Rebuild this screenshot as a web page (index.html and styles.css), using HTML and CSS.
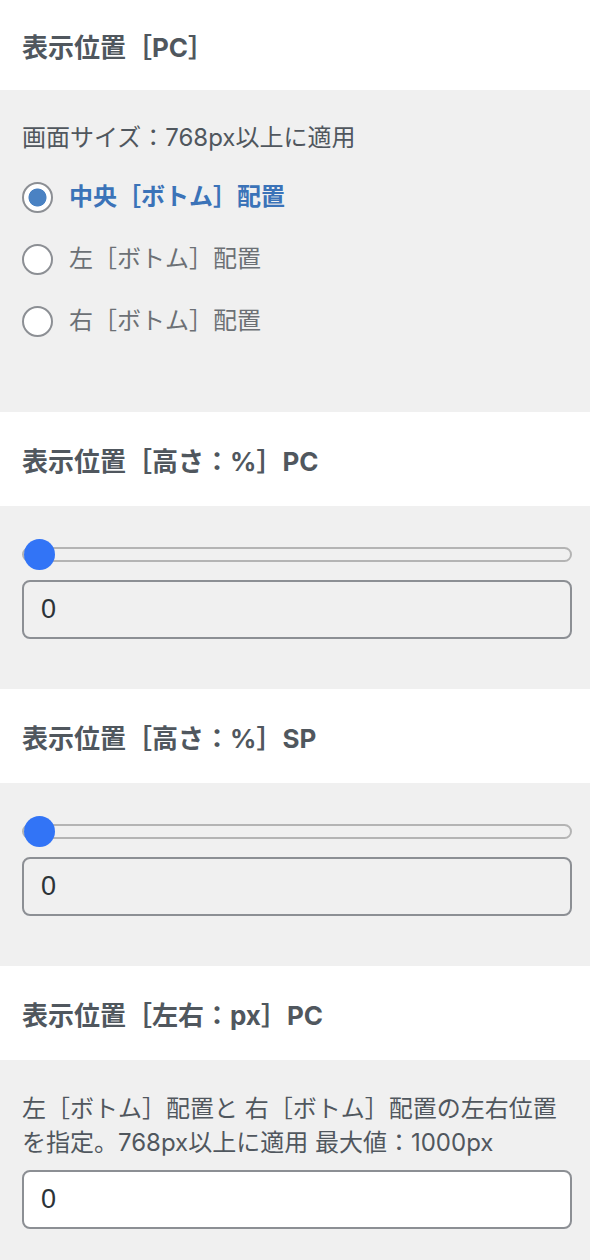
FILE: index.html
```html
<!DOCTYPE html>
<html lang="ja">
<head>
<meta charset="utf-8">
<title>表示位置</title>
<link rel="stylesheet" href="styles.css">
</head>
<body>
<div class="controls">
  <section class="control">
    <h3 class="control-title first">表示位置［PC］</h3>
    <div class="control-body radios-body">
      <p class="desc">画面サイズ：768px以上に適用</p>
      <ul class="radio-list">
        <li class="radio-row"><input class="radio" type="radio" name="pos" id="pos-c" checked><label class="radio-label selected" for="pos-c">中央［ボトム］配置</label></li>
        <li class="radio-row"><input class="radio" type="radio" name="pos" id="pos-l"><label class="radio-label" for="pos-l">左［ボトム］配置</label></li>
        <li class="radio-row"><input class="radio" type="radio" name="pos" id="pos-r"><label class="radio-label" for="pos-r">右［ボトム］配置</label></li>
      </ul>
    </div>
  </section>
  <section class="control">
    <h3 class="control-title">表示位置［高さ：%］PC</h3>
    <div class="control-body slider-body">
      <input class="range" type="range" min="0" max="100" value="0">
      <input class="num num-gray" type="text" value="0">
    </div>
  </section>
  <section class="control">
    <h3 class="control-title">表示位置［高さ：%］SP</h3>
    <div class="control-body slider-body">
      <input class="range" type="range" min="0" max="100" value="0">
      <input class="num num-gray" type="text" value="0">
    </div>
  </section>
  <section class="control">
    <h3 class="control-title">表示位置［左右：px］PC</h3>
    <div class="control-body text-body">
      <p class="desc">左［ボトム］配置と 右［ボトム］配置の左右位置を指定。768px以上に適用 最大値：1000px</p>
      <input class="num num-white" type="text" value="0">
    </div>
  </section>
</div>
</body>
</html>
```

FILE: styles.css
```css
* { box-sizing: border-box; }
html, body { margin: 0; padding: 0; background: #ffffff; }
body {
  width: 590px;
  font-family: Inter, "Noto Sans CJK JP", sans-serif;
  color: #50575e;
}
.controls { display: flex; flex-direction: column; }
.control-title {
  margin: 0;
  height: 94px;
  padding: 0 22px;
  display: flex;
  align-items: center;
  font-size: 26px;
  font-weight: 700;
  color: #50575e;
  background: #ffffff;
}
.control-title.first { height: 90px; }
.control-body {
  background: #f0f0f0;
  padding: 0 18px 0 22px;
  display: flex;
  flex-direction: column;
}
.desc {
  margin: 0;
  font-size: 24px;
  line-height: 34px;
  color: #50575e;
}
.radios-body { padding-top: 31px; padding-bottom: 60px; }
.radio-list {
  list-style: none;
  margin: 11px 0 0;
  padding: 0;
  display: flex;
  flex-direction: column;
}
.radio-row {
  height: 62px;
  display: flex;
  align-items: center;
  gap: 16px;
}
.radio {
  -webkit-appearance: none;
  appearance: none;
  margin: 0;
  width: 31px;
  height: 31px;
  border-radius: 50%;
  border: 2px solid #8c8f94;
  background: #ffffff;
  flex: none;
}
.radio:checked {
  background: radial-gradient(circle, #4a82c3 0 8.6px, #ffffff 9.4px);
}
.radio-label {
  font-size: 24px;
  line-height: 34px;
  color: #6c7075;
}
.radio-label.selected { color: #3b73b8; font-weight: 700; }

.slider-body { padding-top: 33px; padding-bottom: 50px; }
.range {
  -webkit-appearance: none;
  appearance: none;
  margin: 0;
  width: 550px;
  height: 31px;
  background: transparent;
}
.range::-webkit-slider-runnable-track {
  height: 15px;
  border: 2px solid #b4b4b4;
  border-radius: 8px;
  background: #f0f0f0;
  box-sizing: border-box;
}
.range::-webkit-slider-thumb {
  -webkit-appearance: none;
  appearance: none;
  width: 31px;
  height: 31px;
  border-radius: 50%;
  background: #3274f6;
  border: none;
  margin-top: -10px;
}
.num {
  margin: 10px 0 0;
  width: 550px;
  height: 59px;
  border: 2px solid #8c8f94;
  border-radius: 8px;
  padding: 0 17px;
  font-family: "Liberation Sans", Arial, sans-serif;
  font-size: 27px;
  color: #2c3338;
  outline: none;
}
.num-gray { background: #f0f0f0; }
.text-body { padding-top: 32px; padding-bottom: 40px; }
.num-white { background: #ffffff; }
```
